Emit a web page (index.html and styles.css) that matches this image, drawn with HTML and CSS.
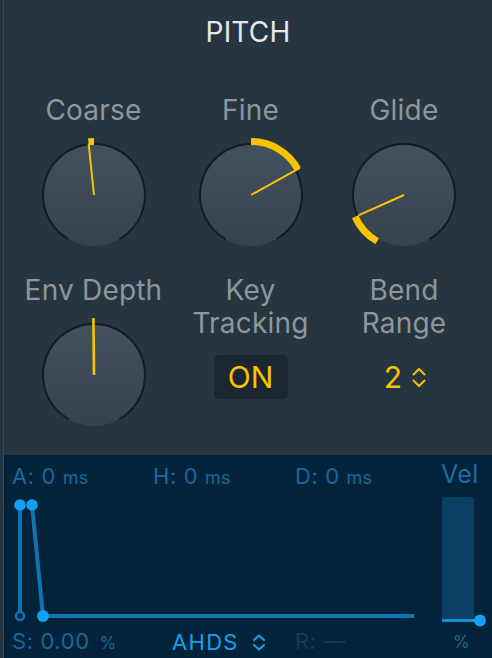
FILE: index.html
```html
<!DOCTYPE html>
<html>
<head>
<meta charset="utf-8">
<link rel="stylesheet" href="styles.css">
</head>
<body>
<div class="app">
  <section class="pitch">
    <h1 class="title">PITCH</h1>
    <div class="grid">
      <div class="cell">
        <div class="label">Coarse</div>
        <svg class="knob" viewBox="0 0 120 120" width="120" height="120">
          <defs>
            <linearGradient id="face" x1="0" y1="0" x2="0" y2="1">
              <stop offset="0" stop-color="#43515c"/>
              <stop offset="1" stop-color="#36434e"/>
            </linearGradient>
          </defs>
          <circle cx="60" cy="60" r="51" fill="url(#face)"/>
          <path d="M34.5 104.17 A51 51 0 1 1 85.5 104.17" class="ring"/>
          <path d="M54.41 6.79 A53.5 53.5 0 0 1 60 6.5" class="arc"/>
          <line x1="60" y1="60" x2="54.6" y2="8.3" class="needle"/>
        </svg>
      </div>
      <div class="cell">
        <div class="label">Fine</div>
        <svg class="knob" viewBox="0 0 120 120" width="120" height="120">
          <circle cx="60" cy="60" r="51" fill="url(#face)"/>
          <path d="M34.5 104.17 A51 51 0 1 1 85.5 104.17" class="ring"/>
          <path d="M60 6.5 A53.5 53.5 0 0 1 106.79 34.06" class="arc"/>
          <line x1="60" y1="60" x2="108.98" y2="32.85" class="needle"/>
        </svg>
      </div>
      <div class="cell">
        <div class="label">Glide</div>
        <svg class="knob" viewBox="0 0 120 120" width="120" height="120">
          <circle cx="60" cy="60" r="51" fill="url(#face)"/>
          <path d="M34.5 104.17 A51 51 0 1 1 85.5 104.17" class="ring"/>
          <path d="M33.25 106.33 A53.5 53.5 0 0 1 11.13 81.76" class="arc"/>
          <line x1="60" y1="60" x2="14.32" y2="80.34" class="needle"/>
        </svg>
      </div>
      <div class="cell">
        <div class="label">Env Depth</div>
        <svg class="knob" viewBox="0 0 120 120" width="120" height="120">
          <circle cx="60" cy="60" r="51" fill="url(#face)"/>
          <path d="M34.5 104.17 A51 51 0 1 1 85.5 104.17" class="ring"/>
          <line x1="60" y1="60" x2="59.4" y2="3" class="needle thick"/>
        </svg>
      </div>
      <div class="cell">
        <div class="label">Key<br>Tracking</div>
        <button class="toggle">ON</button>
      </div>
      <div class="cell">
        <div class="label">Bend<br>Range</div>
        <div class="stepper">
          <span>2</span>
          <svg class="chev" viewBox="0 0 14 21" width="14" height="21">
            <path d="M1.5 7.5 L7 2 L12.5 7.5 M1.5 13.5 L7 19 L12.5 13.5"/>
          </svg>
        </div>
      </div>
    </div>
  </section>
  <section class="env">
    <div class="env-main">
      <div class="env-row top">
        <span class="param">A: 0 <small>ms</small></span>
        <span class="param">H: 0 <small>ms</small></span>
        <span class="param">D: 0 <small>ms</small></span>
      </div>
      <svg class="graph" viewBox="0 0 437 137" width="437" height="137">
        <line x1="16" y1="14" x2="16" y2="121" class="seg"/>
        <line x1="28" y1="14" x2="39" y2="125" class="seg"/>
        <line x1="39" y1="125" x2="410" y2="125" class="seg"/>
        <circle cx="16" cy="125" r="4" class="hollow"/>
        <circle cx="16" cy="14" r="5.8" class="dot"/>
        <circle cx="28" cy="14" r="5.8" class="dot"/>
        <circle cx="39" cy="125" r="6" class="dot"/>
      </svg>
      <div class="env-row bottom">
        <span class="param">S: 0.00 <small class="pct">%</small></span>
        <span class="mode">AHDS
          <svg class="chev small" viewBox="0 0 14 17" width="14" height="17">
            <path d="M2 6 L7 1.5 L12 6 M2 11 L7 15.5 L12 11"/>
          </svg>
        </span>
        <span class="param dim">R: —</span>
      </div>
    </div>
    <div class="vel">
      <div class="vel-label">Vel</div>
      <svg class="vel-bar" viewBox="0 0 51 133" width="51" height="133">
        <path d="M1 4 Q1 2 3 2 L31 2 Q33 2 33 4 L33 125 L1 125 Z" class="bar"/>
        <line x1="1" y1="125.5" x2="39" y2="125.5" class="vline"/>
        <circle cx="39" cy="125.5" r="6" class="dot"/>
      </svg>
      <div class="vel-unit">%</div>
    </div>
  </section>
</div>
</body>
</html>
```
FILE: styles.css
```css
* { box-sizing: border-box; }
html, body {
  margin: 0;
  padding: 0;
  background: #263540;
  width: 492px;
  height: 658px;
  overflow: hidden;
  font-family: Inter, "Liberation Sans", sans-serif;
}
.app {
  margin-left: 3px;
  border-left: 1px solid #3a4854;
  height: 658px;
  display: flex;
  flex-direction: column;
}
.pitch {
  background: #263540;
  padding: 16px 0 20px 11px;
}
.title {
  margin: 0;
  font-size: 28px;
  line-height: 33px;
  font-weight: 400;
  color: #e4e8eb;
  text-align: center;
  padding-right: 11px;
  letter-spacing: 0.2px;
}
.grid {
  margin-top: 45px;
  display: grid;
  grid-template-columns: 157px 157px 150px;
  row-gap: 19px;
}
.cell {
  display: flex;
  flex-direction: column;
  align-items: center;
}
.label {
  font-size: 28px;
  line-height: 33px;
  color: #8d969d;
  text-align: center;
  white-space: nowrap;
  letter-spacing: 0.2px;
}
.knob {
  display: block;
  margin-top: 8px;
  overflow: visible;
}
.ring {
  fill: none;
  stroke: #151b20;
  stroke-width: 2;
}
.arc {
  fill: none;
  stroke: #f8c300;
  stroke-width: 7;
}
.needle {
  stroke: #f8c300;
  stroke-width: 2;
  stroke-linecap: butt;
}
.needle.thick { stroke-width: 2.6; }
.toggle {
  margin-top: 15px;
  width: 74px;
  height: 44px;
  border: none;
  border-radius: 5px;
  background: #1c2630;
  color: #f8c300;
  font-family: Inter, "Liberation Sans", sans-serif;
  font-size: 30px;
  line-height: 44px;
  padding: 0;
}
.stepper {
  margin-top: 15px;
  height: 44px;
  display: flex;
  align-items: center;
  gap: 10px;
  color: #f8c300;
  font-size: 30px;
  padding-left: 2px;
}
.chev {
  display: block;
  fill: none;
  stroke: #f8c300;
  stroke-width: 2;
  stroke-linecap: round;
  stroke-linejoin: round;
}
.env {
  flex: 1;
  background: #03233a;
  display: flex;
}
.env-main {
  width: 437px;
  padding-top: 8px;
}
.env-row {
  display: grid;
  padding-left: 8px;
  font-size: 22px;
  line-height: 26px;
  color: #1a68a0;
  white-space: nowrap;
  letter-spacing: 0.6px;
}
.env-row.top { grid-template-columns: 141px 142px 1fr; }
.env-row.bottom { grid-template-columns: 160px 123px 1fr; }
.param small {
  font-size: 18px;
  letter-spacing: 0.3px;
}
.param small.pct { font-size: 17px; margin-left: 3px; }
.param.dim { color: #0e3d5e; }
.mode {
  color: #18a0ef;
  display: flex;
  align-items: center;
  gap: 13px;
  letter-spacing: 1.3px;
}
.chev.small { stroke: #18a0ef; }
.graph { display: block; }
.seg {
  stroke: #1273b2;
  stroke-width: 4;
}
.hollow {
  fill: none;
  stroke: #1273b2;
  stroke-width: 2.5;
}
.dot { fill: #12a0f5; }
.vel {
  width: 51px;
  padding-top: 5px;
}
.vel-label {
  font-size: 25px;
  line-height: 28px;
  color: #1c6ca6;
  letter-spacing: 0.3px;
}
.vel-bar {
  display: block;
  margin-top: 7px;
  overflow: visible;
}
.bar { fill: #0b3f62; }
.vline {
  stroke: #12a0f5;
  stroke-width: 2.5;
}
.vel-unit {
  margin-top: 4px;
  padding-left: 12px;
  font-size: 17px;
  line-height: 20px;
  color: #1a68a0;
}
```
